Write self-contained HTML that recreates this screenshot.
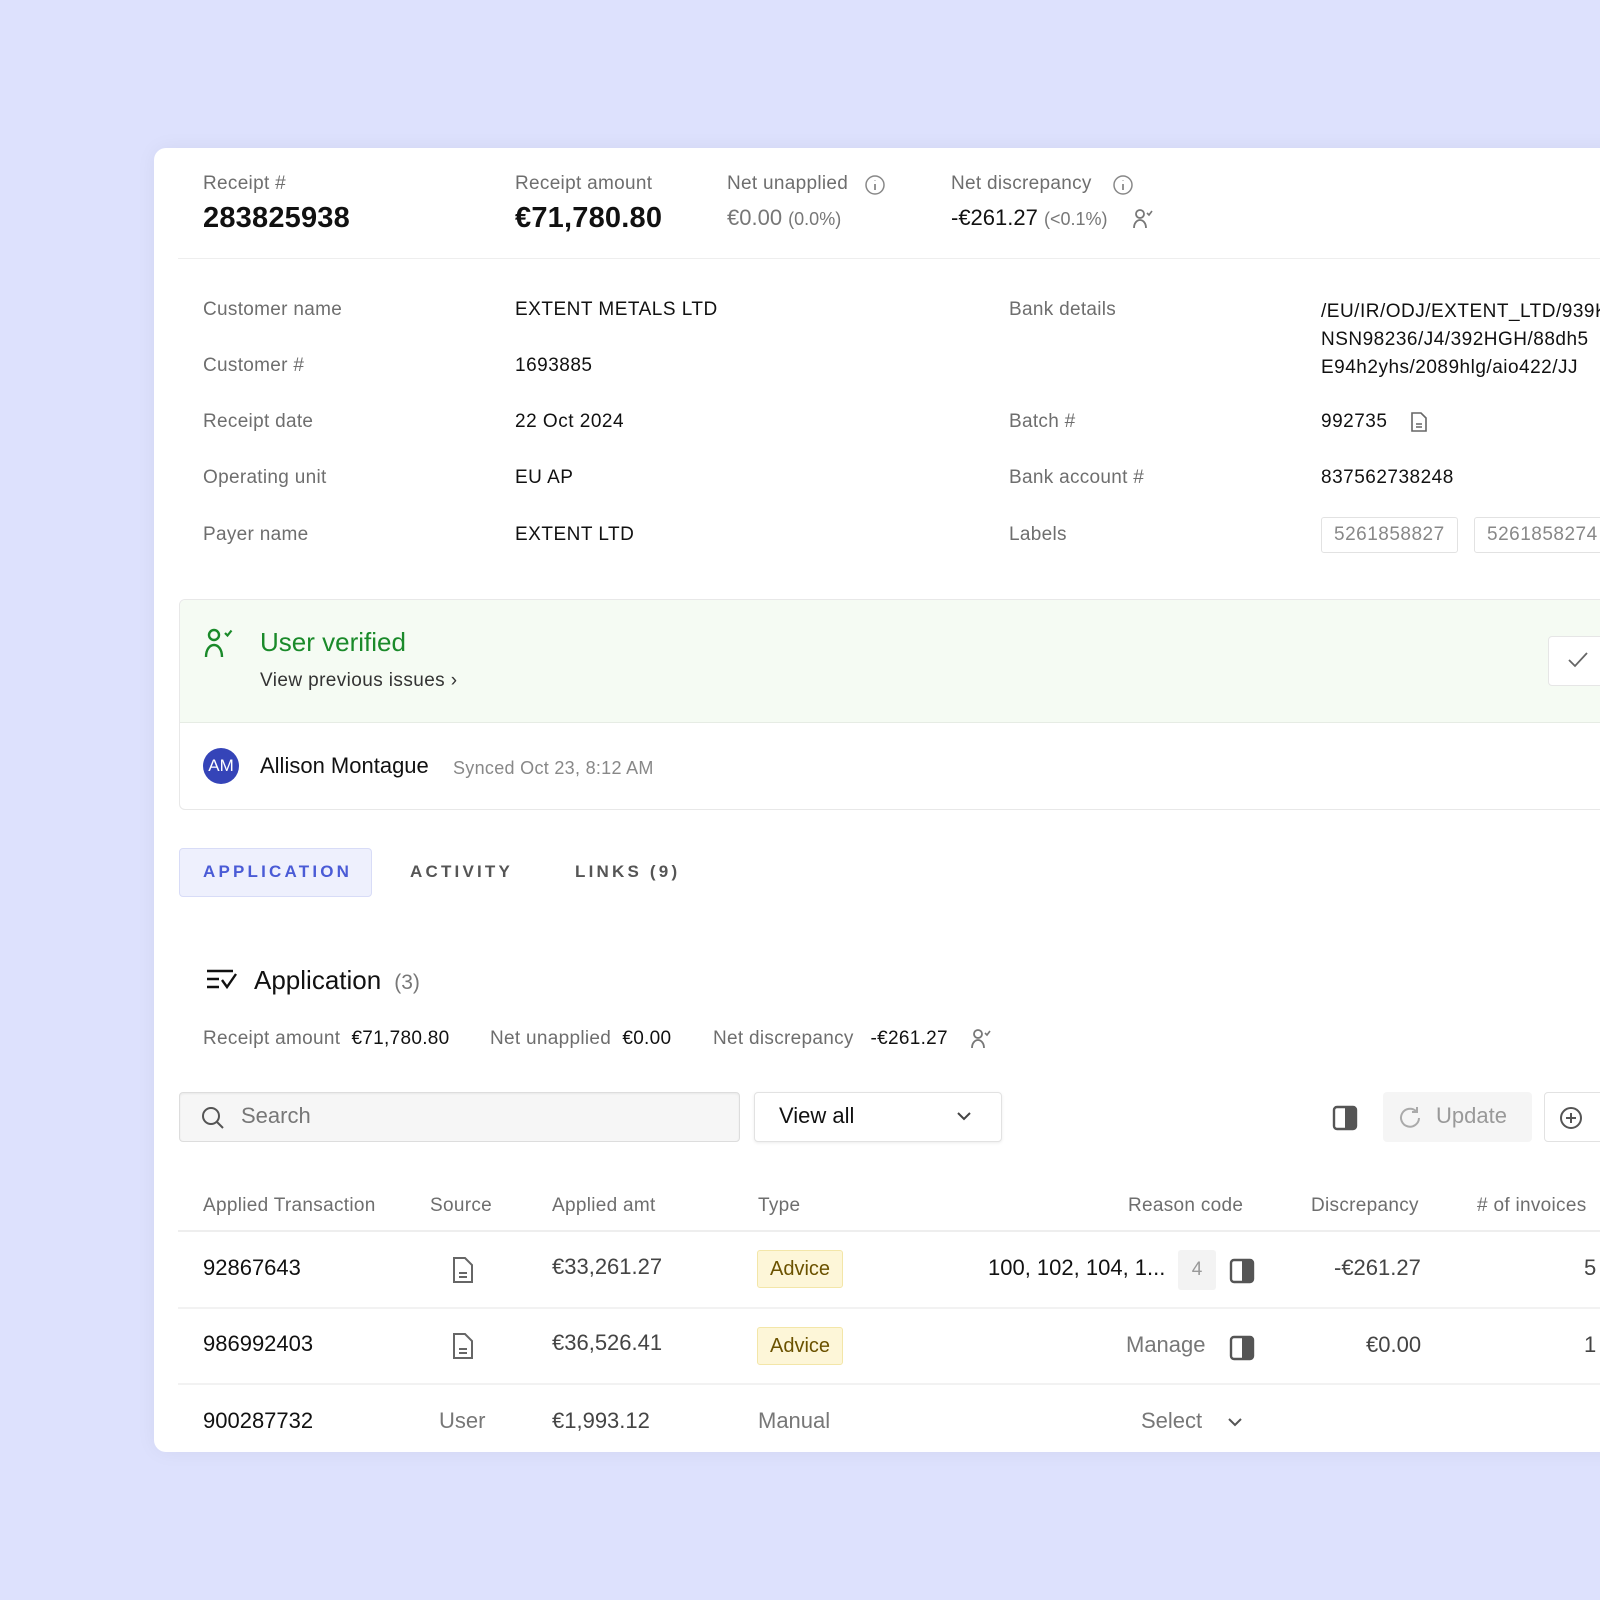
<!DOCTYPE html>
<html><head><meta charset="utf-8"><style>
*{margin:0;padding:0;box-sizing:border-box}
body{width:1600px;height:1600px;background:#dde1fd;font-family:"Liberation Sans",sans-serif;position:relative;overflow:hidden;color:#111}
.card{position:absolute;left:154px;top:148px;width:1500px;height:1304px;background:#fff;border-radius:12px;box-shadow:0 0 20px rgba(0,0,0,.05);overflow:hidden}
.a{position:absolute;white-space:nowrap;line-height:24px}
.l{color:#6e6e6e;font-size:19px;letter-spacing:.3px}
.v{color:#111;font-size:19px;letter-spacing:.5px}
.big{font-size:29px;font-weight:bold;line-height:34px;letter-spacing:.2px}
svg{position:absolute}
.tag{position:absolute;border:1px solid #e2e2e2;border-radius:3px;color:#888;font-size:19px;line-height:34px;padding:0 12px;letter-spacing:.5px}
.tab{position:absolute;font-size:17px;font-weight:bold;letter-spacing:3.2px;color:#555;line-height:48px}
.row{font-size:22px}
.badge{position:absolute;background:#fdf6d8;border:1px solid #f3e6a8;border-radius:3px;color:#6b5200;font-size:20px;line-height:36px;padding:0 12px}
</style></head><body>
<div class="card">
<div class="a l" style="left:49px;top:24px">Receipt #</div>
<div class="a big" style="left:49px;top:53px">283825938</div>
<div class="a l" style="left:361px;top:24px">Receipt amount</div>
<div class="a big" style="left:361px;top:53px">€71,780.80</div>
<div class="a l" style="left:573px;top:24px">Net unapplied</div>
<svg style="left:710px;top:26px" width="22" height="22" viewBox="0 0 22 22"><circle cx="11" cy="11" r="9" fill="none" stroke="#888" stroke-width="1.5"/><path d="M11 10v6M11 6.5v.5" stroke="#888" stroke-width="1.8"/></svg>
<div class="a" style="left:573px;top:58px;font-size:22px;color:#777">€0.00 <span style="font-size:18px">(0.0%)</span></div>
<div class="a l" style="left:797px;top:24px">Net discrepancy</div>
<svg style="left:958px;top:26px" width="22" height="22" viewBox="0 0 22 22"><circle cx="11" cy="11" r="9" fill="none" stroke="#888" stroke-width="1.5"/><path d="M11 10v6M11 6.5v.5" stroke="#888" stroke-width="1.8"/></svg>
<div class="a" style="left:797px;top:58px;font-size:22px;color:#111">-€261.27 <span style="font-size:18px;color:#777">(&lt;0.1%)</span></div>
<svg style="left:978px;top:60px" width="24" height="22" viewBox="0 0 24 22"><circle cx="8" cy="6" r="4" fill="none" stroke="#777" stroke-width="1.8"/><path d="M2 20c0-5 3-8 6-8s6 3 6 8" fill="none" stroke="#777" stroke-width="1.8"/><path d="M15 5l2 2 3-4" fill="none" stroke="#777" stroke-width="1.6"/></svg>
<div style="position:absolute;left:24px;top:110px;width:1480px;height:1px;background:#eee"></div>

<div class="a l" style="left:49px;top:150px">Customer name</div><div class="a v" style="left:361px;top:150px">EXTENT METALS LTD</div>
<div class="a l" style="left:49px;top:206px">Customer #</div><div class="a v" style="left:361px;top:206px">1693885</div>
<div class="a l" style="left:49px;top:262px">Receipt date</div><div class="a v" style="left:361px;top:262px">22 Oct 2024</div>
<div class="a l" style="left:49px;top:318px">Operating unit</div><div class="a v" style="left:361px;top:318px">EU AP</div>
<div class="a l" style="left:49px;top:375px">Payer name</div><div class="a v" style="left:361px;top:375px">EXTENT LTD</div>
<div class="a l" style="left:855px;top:150px">Bank details</div>
<div class="a v" style="left:1167px;top:150px;line-height:28px">/EU/IR/ODJ/EXTENT_LTD/939KL<br>NSN98236/J4/392HGH/88dh5<br>E94h2yhs/2089hlg/aio422/JJ</div>
<div class="a l" style="left:855px;top:262px">Batch #</div><div class="a v" style="left:1167px;top:262px">992735</div>
<svg style="left:1255px;top:263px" width="20" height="22" viewBox="0 0 20 22"><path d="M3 2h9l5 5v13H3z" fill="none" stroke="#666" stroke-width="1.6"/><path d="M7 13h6M7 16h6" stroke="#666" stroke-width="1.5"/></svg>
<div class="a l" style="left:855px;top:318px">Bank account #</div><div class="a v" style="left:1167px;top:318px">837562738248</div>
<div class="a l" style="left:855px;top:375px">Labels</div>
<div class="tag" style="left:1167px;top:369px">5261858827</div>
<div class="tag" style="left:1320px;top:369px">5261858274</div>

<div style="position:absolute;left:25px;top:451px;width:1480px;height:211px;border:1px solid #e8e8e8;border-radius:6px;overflow:hidden">
 <div style="position:absolute;left:0;top:0;right:0;height:123px;background:#f5fbf3;border-bottom:1px solid #e6ece4"></div>
</div>
<svg style="left:49px;top:478px" width="34" height="34" viewBox="0 0 34 34"><circle cx="11" cy="9" r="5" fill="none" stroke="#1a8a2a" stroke-width="2.4"/><path d="M3 31c0-8 4-12 8-12s8 4 8 12" fill="none" stroke="#1a8a2a" stroke-width="2.4"/><path d="M22 7l2.5 2.5 4-5" fill="none" stroke="#1a8a2a" stroke-width="2.2"/></svg>
<div class="a" style="left:106px;top:479px;font-size:26px;line-height:30px;color:#1a8a2a">User verified</div>
<div class="a" style="left:106px;top:521px;font-size:19px;color:#333;letter-spacing:.4px">View previous issues ›</div>
<div style="position:absolute;left:1394px;top:488px;width:60px;height:50px;background:#fff;border:1px solid #e6e6e6;border-radius:4px"></div>
<svg style="left:1412px;top:502px" width="24" height="20" viewBox="0 0 24 20"><path d="M3 10l6 6L21 3" fill="none" stroke="#666" stroke-width="1.8"/></svg>
<div style="position:absolute;left:49px;top:600px;width:36px;height:36px;border-radius:50%;background:#3544b8;color:#fff;font-size:17px;line-height:36px;text-align:center">AM</div>
<div class="a" style="left:106px;top:606px;font-size:22px">Allison Montague</div>
<div class="a" style="left:299px;top:608px;font-size:18px;color:#888;letter-spacing:.3px">Synced Oct 23, 8:12 AM</div>

<div style="position:absolute;left:25px;top:700px;width:193px;height:49px;background:#eef0fd;border:1px solid #d8dcf7;border-radius:4px"></div>
<div class="tab" style="left:49px;top:700px;color:#4a5bd6">APPLICATION</div>
<div class="tab" style="left:256px;top:700px">ACTIVITY</div>
<div class="tab" style="left:421px;top:700px">LINKS (9)</div>

<svg style="left:52px;top:820px" width="32" height="24" viewBox="0 0 32 24"><path d="M1 3h26M1 11h12M1 19h12" stroke="#111" stroke-width="2.4"/><path d="M16 12l5 7 9-13" fill="none" stroke="#111" stroke-width="2.4"/></svg>
<div class="a" style="left:100px;top:815px;font-size:26px;line-height:34px">Application <span style="font-size:21px;color:#777">&nbsp;(3)</span></div>
<div class="a l" style="left:49px;top:879px">Receipt amount &nbsp;<span style="color:#111">€71,780.80</span></div>
<div class="a l" style="left:336px;top:879px">Net unapplied &nbsp;<span style="color:#111">€0.00</span></div>
<div class="a l" style="left:559px;top:879px">Net discrepancy &nbsp;&nbsp;<span style="color:#111">-€261.27</span></div>
<svg style="left:816px;top:880px" width="24" height="22" viewBox="0 0 24 22"><circle cx="8" cy="6" r="4" fill="none" stroke="#777" stroke-width="1.8"/><path d="M2 20c0-5 3-8 6-8s6 3 6 8" fill="none" stroke="#777" stroke-width="1.8"/><path d="M15 5l2 2 3-4" fill="none" stroke="#777" stroke-width="1.6"/></svg>

<div style="position:absolute;left:25px;top:944px;width:561px;height:50px;background:#f6f6f6;border:1px solid #ddd;border-radius:4px;box-shadow:inset 0 1px 2px rgba(0,0,0,.06)"></div>
<svg style="left:46px;top:957px" width="26" height="26" viewBox="0 0 26 26"><circle cx="11" cy="11" r="8" fill="none" stroke="#555" stroke-width="2"/><path d="M17 17l6 6" stroke="#555" stroke-width="2"/></svg>
<div class="a" style="left:87px;top:956px;font-size:22px;color:#777">Search</div>
<div style="position:absolute;left:600px;top:944px;width:248px;height:50px;background:#fff;border:1px solid #e2e2e2;border-radius:4px;box-shadow:0 1px 3px rgba(0,0,0,.08)"></div>
<div class="a" style="left:625px;top:956px;font-size:22px">View all</div>
<svg style="left:802px;top:961px" width="16" height="14" viewBox="0 0 16 14"><path d="M2 4l6 6 6-6" fill="none" stroke="#444" stroke-width="2"/></svg>
<svg style="left:1178px;top:957px" width="26" height="26" viewBox="0 0 26 26"><rect x="2" y="2" width="22" height="22" rx="3" fill="none" stroke="#555" stroke-width="2.4"/><rect x="13" y="2" width="11" height="22" fill="#555"/></svg>
<div style="position:absolute;left:1229px;top:944px;width:149px;height:50px;background:#f5f5f5;border-radius:4px"></div>
<svg style="left:1243px;top:957px" width="26" height="26" viewBox="0 0 26 26"><path d="M22 13a9 9 0 1 1-3-7" fill="none" stroke="#aaa" stroke-width="2"/><path d="M20 2v5h-5" fill="none" stroke="#aaa" stroke-width="2"/></svg>
<div class="a" style="left:1282px;top:956px;font-size:22px;color:#999">Update</div>
<div style="position:absolute;left:1390px;top:944px;width:120px;height:50px;background:#fff;border:1px solid #e2e2e2;border-radius:4px"></div>
<svg style="left:1404px;top:957px" width="26" height="26" viewBox="0 0 26 26"><circle cx="13" cy="13" r="10" fill="none" stroke="#555" stroke-width="2"/><path d="M13 8v10M8 13h10" stroke="#555" stroke-width="2"/></svg>

<div class="a l" style="left:49px;top:1046px">Applied Transaction</div>
<div class="a l" style="left:276px;top:1046px">Source</div>
<div class="a l" style="left:398px;top:1046px">Applied amt</div>
<div class="a l" style="left:604px;top:1046px">Type</div>
<div class="a l" style="left:974px;top:1046px">Reason code</div>
<div class="a l" style="left:1157px;top:1046px">Discrepancy</div>
<div class="a l" style="left:1323px;top:1046px">#&nbsp;of invoices</div>
<div style="position:absolute;left:24px;top:1082px;width:1480px;height:2px;background:#eee"></div>

<div class="a row" style="left:49px;top:1108px">92867643</div>
<svg style="left:297px;top:1108px" width="24" height="28" viewBox="0 0 24 28"><path d="M3 2h11l7 7v17H3z" fill="none" stroke="#666" stroke-width="2"/><path d="M8 17h8M8 21h8" stroke="#666" stroke-width="2"/></svg>
<div class="a row" style="left:398px;top:1107px;color:#444">€33,261.27</div>
<div class="badge" style="left:603px;top:1102px">Advice</div>
<div class="a row" style="left:834px;top:1108px">100, 102, 104, 1...</div>
<div style="position:absolute;left:1024px;top:1102px;width:38px;height:40px;background:#f3f3f3;border-radius:3px;color:#999;font-size:19px;line-height:40px;text-align:center">4</div>
<svg style="left:1075px;top:1110px" width="26" height="26" viewBox="0 0 26 26"><rect x="2" y="2" width="22" height="22" rx="3" fill="none" stroke="#555" stroke-width="2.4"/><rect x="13" y="2" width="11" height="22" fill="#555"/></svg>
<div class="a row" style="left:1180px;top:1108px;color:#444">-€261.27</div>
<div class="a row" style="left:1430px;top:1108px;color:#444">5</div>
<div style="position:absolute;left:24px;top:1159px;width:1480px;height:2px;background:#f2f2f2"></div>

<div class="a row" style="left:49px;top:1184px">986992403</div>
<svg style="left:297px;top:1184px" width="24" height="28" viewBox="0 0 24 28"><path d="M3 2h11l7 7v17H3z" fill="none" stroke="#666" stroke-width="2"/><path d="M8 17h8M8 21h8" stroke="#666" stroke-width="2"/></svg>
<div class="a row" style="left:398px;top:1183px;color:#444">€36,526.41</div>
<div class="badge" style="left:603px;top:1179px">Advice</div>
<div class="a row" style="left:972px;top:1185px;color:#777">Manage</div>
<svg style="left:1075px;top:1187px" width="26" height="26" viewBox="0 0 26 26"><rect x="2" y="2" width="22" height="22" rx="3" fill="none" stroke="#555" stroke-width="2.4"/><rect x="13" y="2" width="11" height="22" fill="#555"/></svg>
<div class="a row" style="left:1212px;top:1185px;color:#444">€0.00</div>
<div class="a row" style="left:1430px;top:1185px;color:#444">1</div>
<div style="position:absolute;left:24px;top:1235px;width:1480px;height:2px;background:#f2f2f2"></div>

<div class="a row" style="left:49px;top:1261px">900287732</div>
<div class="a row" style="left:285px;top:1261px;color:#777">User</div>
<div class="a row" style="left:398px;top:1261px;color:#444">€1,993.12</div>
<div class="a row" style="left:604px;top:1261px;color:#777">Manual</div>
<div class="a row" style="left:987px;top:1261px;color:#777">Select</div>
<svg style="left:1073px;top:1267px" width="16" height="14" viewBox="0 0 16 14"><path d="M2 4l6 6 6-6" fill="none" stroke="#555" stroke-width="2"/></svg>
</div>
</body></html>
